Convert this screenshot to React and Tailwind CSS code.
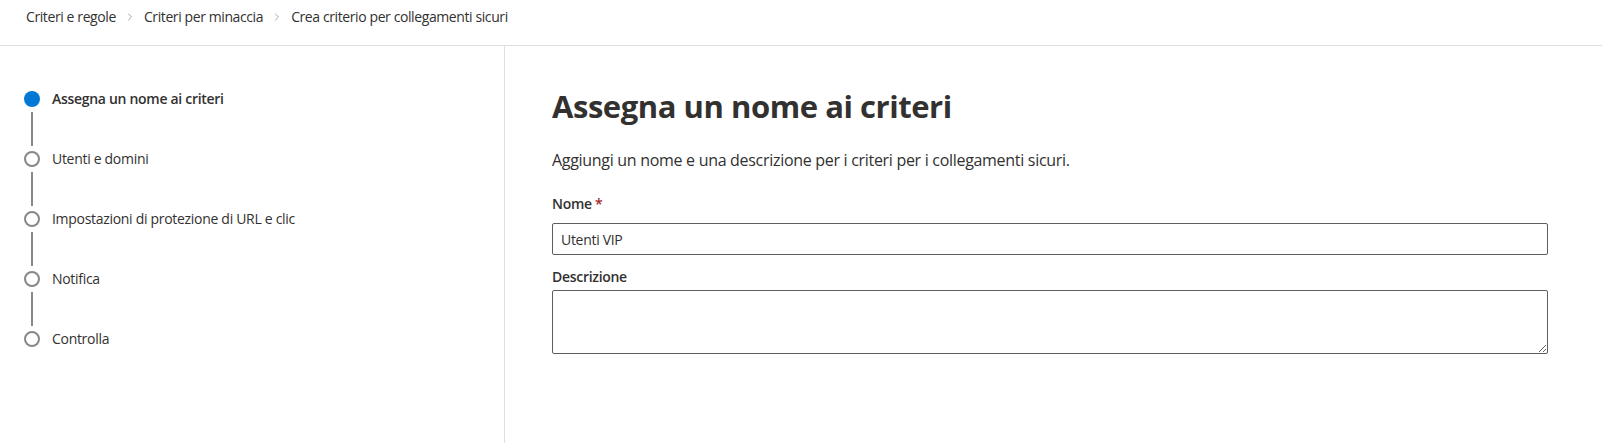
import React from "react";
import { ChevronRight } from "lucide-react";

const font = { fontFamily: '"Open Sans", "Noto Sans", Arial, sans-serif' };

const crumbs = ["Criteri e regole", "Criteri per minaccia", "Crea criterio per collegamenti sicuri"];

const steps = [
  "Assegna un nome ai criteri",
  "Utenti e domini",
  "Impostazioni di protezione di URL e clic",
  "Notifica",
  "Controlla",
];

// Breadcrumb bar on top
function Breadcrumb() {
  return (
    <div className="h-[46px] border-b border-[#e1dfdd] pl-[26px] pt-[7px]">
      <div className="flex items-center text-[14px] leading-5 tracking-[-0.4px] text-[#323130]">
        {crumbs.map((c, i) => (
          <React.Fragment key={c}>
            {i > 0 && <ChevronRight className="mx-[8px] h-3 w-3 text-[#8a8886]" strokeWidth={1.5} />}
            <span>{c}</span>
          </React.Fragment>
        ))}
      </div>
    </div>
  );
}

// Wizard steps on the left
function Steps() {
  return (
    <nav className="w-[505px] shrink-0 border-r border-[#e1dfdd] pl-6 pt-[43px]">
      {steps.map((label, i) => {
        const active = i === 0;
        const last = i === steps.length - 1;
        return (
          <div key={label} className="flex gap-3">
            <div className="flex w-4 flex-col items-center">
              <div className="flex h-5 items-center">
                {active ? (
                  <span className="h-4 w-4 rounded-full bg-[#0078d4]" />
                ) : (
                  <span className="h-4 w-4 rounded-full border-2 border-[#8a8886] bg-white" />
                )}
              </div>
              {!last && <span className="my-[3px] h-[34px] w-[2px] bg-[#8a8886]" />}
            </div>
            <span
              className={`text-[14px] leading-5 tracking-[-0.3px] text-[#323130] ${active ? "font-semibold" : ""}`}
            >
              {label}
            </span>
          </div>
        );
      })}
    </nav>
  );
}

export default function App() {
  return (
    <div className="h-[443px] overflow-hidden bg-white text-[#323130]" style={font}>
      <Breadcrumb />
      <div className="flex h-[397px]">
        <Steps />
        <main className="flex-1 pl-[47px] pr-[54px] pt-10">
          <h1 className="text-[31px] font-bold leading-10 tracking-[-0.45px]">Assegna un nome ai criteri</h1>
          <p className="mt-[22px] text-[16px] leading-6 tracking-[-0.3px]">
            Aggiungi un nome e una descrizione per i criteri per i collegamenti sicuri.
          </p>

          <label className="mt-[22px] block text-[14px] font-semibold leading-5 tracking-[-0.3px]">
            Nome <span className="text-[#a4262c]">*</span>
          </label>
          <input
            className="mt-[9px] block h-[32px] w-full rounded-[2px] border border-[#605e5c] px-2 text-[14px] tracking-[-0.3px] text-[#323130] outline-none"
            defaultValue="Utenti VIP"
          />

          <label className="mt-3 block text-[14px] font-semibold leading-5 tracking-[-0.3px]">Descrizione</label>
          <textarea className="mt-[3px] block h-[64px] w-full rounded-[2px] border border-[#605e5c] px-2 py-1 text-[14px] outline-none" />
        </main>
      </div>
    </div>
  );
}
